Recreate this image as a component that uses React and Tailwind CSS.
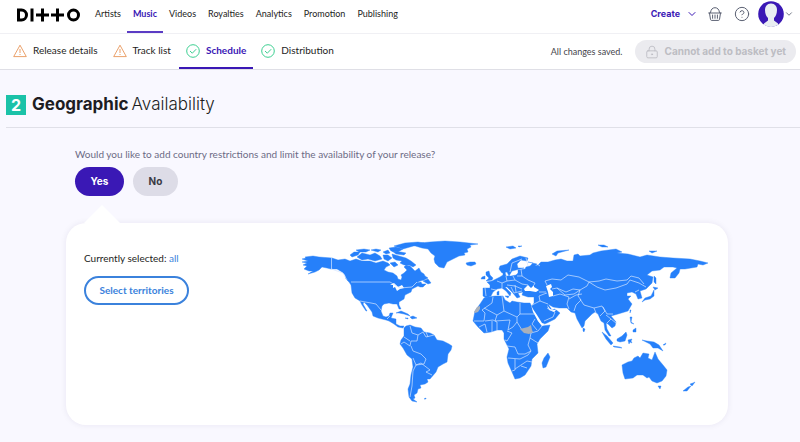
import { ChevronDown, CircleHelp, LockKeyhole } from "lucide-react";

const navItems = ["Artists", "Music", "Videos", "Royalties", "Analytics", "Promotion", "Publishing"];

const steps = [
  { label: "Release details", done: false },
  { label: "Track list", done: false },
  { label: "Schedule", done: true },
  { label: "Distribution", done: true },
];

const land = [
  // North America
  "M302 258L306 257L305 256L313 255L319 256L332 257L338 259L345 258L350 260L356 258L362 260L370 260L376 262L383 260L388 262L390 264L386 266L384 269L388 271L393 272L397 275L398 278L401 279L402 276L401 274L404 272L407 269L404 266L406 264L410 265L412 267L415 270L419 267L421 271L424 273L425 275L428 277L424 279L420 280L416 282L421 281L422 283L426 283L423 286L420 286L418 285L412 288L411 291L407 293L405 294L404 298L399 301L399 304L401 308L399 308L397 303L393 303L389 302L384 303L382 305L381 310L383 315L386 316L389 315L390 312L393 312L391 317L396 318L396 323L400 325L404 325L403 327L398 326L394 323L389 320L386 319L378 317L373 315L372 311L367 304L364 301L363 303L367 310L366 310L362 304L360 300L355 297L352 292L351 284L349 281L346 278L345 274L342 271L337 268L331 268L327 267L322 266L319 269L315 271L308 273L313 270L309 270L304 268L307 265L303 264L307 262L302 261L308 260Z",
  // Arctic islands
  "M350 254L354 251L360 251L358 254L352 256Z",
  "M357 256L362 252L370 254L375 252L380 255L382 258L375 260L368 258L362 259Z",
  "M356 249L364 248L370 249L366 251L359 251Z",
  "M371 249L376 248L381 249L378 251Z",
  "M383 251L388 249L390 252L386 253Z",
  "M383 254L388 254L392 257L388 260L384 258Z",
  "M392 253L399 255L406 257L411 260L416 264L413 266L409 264L404 264L400 262L402 260L396 259L393 257Z",
  "M389 247L396 246L403 248L398 251L391 250Z",
  "M392 250L401 251L406 252L404 254L396 253Z",
  "M394 245L405 242L418 241L424 242L417 244L410 246L403 248Z",
  "M390 262L395 261L398 264L394 266Z",
  "M423 280L428 278L431 282L428 283Z",
  // Caribbean
  "M396 312L401 310L408 313L410 315L404 313L399 312Z",
  "M410 316L413 315L417 317L412 318Z",
  "M405 317L408 317L408 318Z",
  // Greenland
  "M412 244L420 242L430 241L445 240L460 241L478 243L470 244L471 246L467 248L468 251L464 252L465 254L459 255L453 258L447 261L444 267L439 266L435 262L434 258L435 255L431 252L428 248L422 247Z",
  "M466 262L470 261L475 261L476 263L471 265L467 264Z",
  // South America
  "M404 327L406 325L410 324L415 326L421 327L424 331L430 332L434 334L437 339L443 340L449 343L452 345L451 349L448 353L447 361L443 363L438 366L436 371L430 378L427 378L428 381L425 383L420 384L421 387L418 388L417 392L414 394L415 397L413 398L417 401L412 400L409 396L408 388L410 383L411 374L413 366L412 358L407 354L403 347L400 343L401 339L404 335Z",
  "M424 398L426 397L426 398Z",
  // Africa
  "M484 297L488 296L495 295L503 295L505 299L510 302L512 300L517 301L524 302L530 302L532 306L536 315L538 320L542 325L550 324L548 330L540 338L537 343L538 352L532 358L531 365L525 374L520 377L515 378L512 371L508 362L507 356L509 348L504 338L504 332L502 329L497 329L491 331L484 332L478 326L473 320L475 310L480 303Z",
  "M548 352L550 356L546 366L543 367L542 362L544 357Z",
  // Europe and Asia
  "M483 287L490 287L490 284L487 281L492 280L496 278L500 276L503 274L503 271L505 271L506 275L511 275L516 274L518 272L518 269L525 268L526 266L530 265L533 262L528 261L537 263L535 265L538 264L541 261L548 261L555 259L561 258L567 260L573 260L574 254L578 253L580 255L590 254L593 252L601 250L616 248L622 251L617 252L628 253L640 256L647 254L660 256L673 257L690 258L700 260L708 262L703 264L698 263L697 266L685 268L680 268L679 272L675 277L670 277L671 272L677 267L673 266L664 266L660 269L652 270L647 274L653 276L652 282L646 288L640 290L642 297L638 298L636 293L632 291L627 292L627 295L631 295L628 298L632 303L628 310L618 313L611 315L616 321L615 325L612 327L608 323L606 322L607 328L611 335L609 335L605 329L604 322L601 320L598 313L595 311L592 313L585 320L584 325L582 327L577 318L575 312L571 311L567 307L559 307L553 306L548 303L552 309L555 308L560 312L555 318L547 322L542 324L535 313L531 306L534 302L534 296L528 296L522 294L523 291L518 292L520 296L517 297L512 291L507 286L505 286L511 292L510 295L506 290L502 287L497 288L493 291L491 295L486 297L483 295Z",
  "M499 268L500 265L507 263L512 258L520 255L528 257L527 260L521 259L517 263L518 267L524 267L516 269L512 270L509 275L507 271L502 272Z",
  // British Isles
  "M486 271L489 270L490 274L493 277L492 279L486 280L489 277L486 274Z",
  "M482 276L485 275L485 278L481 278Z",
  // Arctic Ocean
  "M506 246L513 245L516 247L510 248Z",
  "M518 245L522 245L519 246Z",
  "M552 253L557 250L569 249L558 252L556 255Z",
  "M598 244L604 244L608 246L602 246Z",
  "M649 250L657 250L652 252Z",
  // Mediterranean islands
  "M497 291L499 290L499 294L497 294Z",
  "M505 295L509 295L508 297Z",
  // Japan and East Asia
  "M654 275L656 277L656 283L654 281Z",
  "M653 286L658 287L655 289Z",
  "M654 289L654 295L650 298L645 299L642 301L645 297L651 295Z",
  "M630 309L631 309L630 312Z",
  "M630 316L632 316L631 321L634 323L631 322Z",
  "M633 329L636 327L636 331L633 331Z",
  "M583 327L585 328L584 331L583 330Z",
  // Indonesia and New Guinea
  "M602 331L607 335L613 342L611 344L606 338Z",
  "M613 345L620 346L622 347L614 346Z",
  "M617 338L622 335L626 331L627 334L625 340L620 341L617 340Z",
  "M628 339L632 338L631 340L632 342L630 341L629 343Z",
  "M642 339L647 340L654 341L659 344L663 350L658 347L653 347L650 343Z",
  "M663 344L666 342L665 344Z",
  // Australia and New Zealand
  "M622 364L628 361L632 360L634 357L638 355L640 357L643 352L649 353L648 357L652 359L655 351L658 358L663 364L667 369L666 375L662 380L657 382L652 380L649 376L647 377L643 374L637 374L633 377L625 378L623 372Z",
  "M658 385L661 385L660 388Z",
  "M683 390L688 386L691 385L687 390Z",
  "M690 383L693 382L695 381L692 385Z",
];

const seas = [
  "M524 288L528 284L531 287L534 284L534 286L539 289L536 291L530 290L525 290Z",
  "M546 285L551 283L552 286L550 288L553 291L553 295L549 296L548 291Z",
  "M390 284L394 282L398 286L402 284L404 287L400 288L397 290L395 286L393 287L393 284Z",
];

const borders = [
  "M331.500 257V268L343 272L347 279",
  "M351 281H390L400 287L412 286L417 281",
  "M360 300L371 302L376 303L381 309M387 318L390 315",
  "M410 325L412 332L418 334L417 340L411 340L410 345L404 341L401 343M404 336L410 340M418 334L423 331L426 336L434 334M426 331L428 336M411 345L413 350L421 353L426 358L424 363L416 364L413 357M416 364L413 370L412 385L410 396M416 364L421 362L430 369L426 371L432 374",
  "M493 296L492 302L482 309L485 312L484 320L474 320M502 295L504 310L497 314L484 307M504 310L517 316V321L513 326L508 329M520 302V313H535M520 313L517 316M497 314L495 320L510 319L508 329M485 320L493 319L497 321V329M479 326L485 323L487 331M492 320L492 331M517 321L522 329L531 332L538 330L542 325M531 332L530 337L538 342M507 330L512 332L507 340L505 339M507 345L515 346L518 353H525L531 350L528 344L530 337M508 357L520 358L528 354L531 350M515 358V369L512 370M515 368L521 364L527 360L532 361M521 365L527 367M535 318L532 323L537 329",
  "M485 287L486 295M491 288L496 289M497 280L502 282L502 287M506 275L507 280L502 282M507 280L515 279L522 283L528 284M513 275L515 279M507 284L515 285L522 288M511 286L514 292L522 290M515 284L516 291M521 268L522 275L528 279L535 282L534 284M517 275L522 275M526 257L528 265M510 271L512 262L522 258M537 263L540 265",
  "M532 304L540 300L539 295L544 293L547 292M539 291L546 291M540 300L548 303M547 307L555 311L553 316L544 320",
  "M547 284L545 280L552 278L561 279L568 274L579 276L589 281L587 285L580 289L573 288L566 291L557 287L552 288M553 295L560 293L569 296L567 303L569 308M557 287L565 294L574 293L580 289M569 298L576 294L582 293M574 310L576 304L581 299L578 295L580 289",
  "M589 281L597 286L605 289L616 287L627 283L630 279L639 282L646 286M589 281L599 280L606 278L617 280L627 279L631 275L639 277L644 283M580 298L584 304L594 307L602 305L605 310L600 315M594 307L596 312M603 306L607 313L613 313M606 314L611 318L607 322M611 318L616 322M635 291L639 289",
];

const WorldMap = () => (
  <svg viewBox="300 238 410 170" className="w-[410px] shrink-0" role="img" aria-label="World map">
    {land.map((d) => (
      <path key={d} d={d} fill="#2680fa" stroke="#2680fa" strokeWidth="0.4" />
    ))}
    <g fill="white">
      {seas.map((d) => (
        <path key={d} d={d} />
      ))}
      <path d="M531 304L533 308L537 314L542 322L545 323L542 325L538 320L533 311Z" />
      <path d="M547 304L550 308L554 309L557 308L554 311L549 309Z" />
    </g>
    <g fill="none" stroke="#d4e5ff" strokeWidth="0.7" strokeLinejoin="round">
      {borders.map((d) => (
        <path key={d} d={d} />
      ))}
    </g>
    <path d="M520 328L524 327L528 326L531 324L532 329L533 331L529 333L524 332Z" fill="#a9b0bb" />
    <path d="M480 305V308L478 311L475 312L474 311L477 306Z" fill="#a9b0bb" />
  </svg>
);

const Logo = () => (
  <svg viewBox="0 0 64 14" className="h-3.5 w-16" fill="none" stroke="black" strokeWidth="3" role="img" aria-label="Ditto">
    <path d="M2.500 2H5.500A5 5 0 0 1 5.500 12H2.500Z" />
    <path d="M16 0.500V13.500M26.500 0.500V13.500M20 7H33M41.500 0.500V13.500M35 7H48" />
    <circle cx="57.500" cy="7" r="5" />
  </svg>
);

const BasketIcon = () => (
  <svg viewBox="0 0 14 14" className="size-3.5" fill="none" stroke="currentColor" strokeLinecap="round">
    <path d="M0.700 6H13.300M1.500 6L2.500 12.500Q2.700 13.400 3.600 13.400H10.400Q11.300 13.400 11.500 12.500L12.500 6" />
    <path d="M2.500 5.500C2.800 2.500 4.500 0.700 7 0.700S11.200 2.500 11.500 5.500" />
    <path d="M4.600 8V11.300M7 8V11.300M9.400 8V11.300" />
  </svg>
);

const StepIcon = ({ done }) =>
  done ? (
    <svg viewBox="0 0 14 14" className="size-3.5" fill="none" stroke="#3ccf91">
      <circle cx="7" cy="7" r="6.300" />
      <path d="M4 7L6.300 9.200L10.200 5.200" />
    </svg>
  ) : (
    <svg viewBox="0 0 14 14" className="size-3.5" fill="none" stroke="#e8965a" strokeWidth="0.9">
      <path d="M7 1.200L13.300 12.600H0.700Z" strokeLinejoin="round" />
      <path d="M7 5V9M7 10V11" />
    </svg>
  );

const Avatar = () => (
  <svg viewBox="0 0 26 26" className="size-[26px]">
    <circle cx="13" cy="13" r="12.800" fill="#3a18b5" />
    <path d="M13 2.500C9 2.500 7 5.500 7 9C7 13 8.500 15.500 10 17V19.500L6 22.500V23.700A12.800 12.800 0 0 0 20 23.700V22.500L16 19.500V17C17.500 15.500 19 13 19 9C19 5.500 17 2.500 13 2.500Z" fill="#e9eef2" />
  </svg>
);

const App = () => {
  return (
    <div className="min-h-screen bg-[#f9f8ff] font-['Lato',sans-serif] text-[#1d1d22]">
      {/* Main navigation */}
      <header className="flex h-[34px] border-b border-[#f0f0f4] bg-white pl-4 pr-1.5">
        <div className="flex items-center pb-1">
          <Logo />
        </div>
        <nav className="ml-[9px] flex h-full text-[9px]">
          {navItems.map((item) => (
            <a
              key={item}
              href="#"
              className={
                item === "Music"
                  ? "flex items-center border-b-2 border-[#5b3cc4] px-1.5 pb-1 font-bold text-[#3a18b5]"
                  : "flex items-center border-b-2 border-transparent px-1.5 pb-1"
              }
            >
              {item}
            </a>
          ))}
        </nav>
        <div className="ml-auto flex items-center pb-1.5">
          <button className="flex items-center gap-1.5 font-['Inter',sans-serif] text-[9px] font-bold text-[#3a18b5]">
            Create
            <ChevronDown className="size-3" />
          </button>
          <button aria-label="Basket" className="ml-2.5 text-[#5a6072]">
            <BasketIcon />
          </button>
          <button aria-label="Help" className="ml-3 text-[#5a6072]">
            <CircleHelp className="size-4" strokeWidth={1.5} />
          </button>
          <button aria-label="Account" className="ml-2 flex items-center text-[#5a6072]">
            <Avatar />
            <ChevronDown className="size-2.5" />
          </button>
        </div>
      </header>

      {/* Release steps */}
      <div className="flex h-9 items-center border-b border-[#dfdfe6] bg-white pl-1.5 pr-1">
        <nav className="flex h-full gap-px text-[10px]">
          {steps.map(({ label, done }) => (
            <a
              key={label}
              href="#"
              className={
                label === "Schedule"
                  ? "flex items-center gap-1.5 border-b-2 border-[#3a18b5] px-[7px] font-bold text-[#3a18b5]"
                  : "flex items-center gap-1.5 border-b-2 border-transparent px-[7px]"
              }
            >
              <StepIcon done={done} />
              {label}
            </a>
          ))}
        </nav>
        <span className="ml-auto text-[9px] text-[#45454c]">All changes saved.</span>
        <button
          disabled
          className="ml-3 flex h-[23px] items-center gap-1.5 rounded-full bg-[#ebebef] px-2.5 font-['Inter',sans-serif] text-[10px] font-bold text-[#bdbdc3]"
        >
          <LockKeyhole className="size-3.5" strokeWidth={1.5} />
          Cannot add to basket yet
        </button>
      </div>

      <main>
        <h1 className="ml-1.5 flex h-[58px] items-center border-b border-[#e0e0e8] pt-3 font-['Inter',sans-serif] text-[17px]">
          <span className="mr-1.5 flex size-5 items-center justify-center bg-[#1bc2a8] text-base leading-none font-bold text-white">
            2
          </span>
          <span className="flex gap-[3px]">
            <span className="font-bold">Geographic</span>
            <span className="font-light">Availability</span>
          </span>
        </h1>

        <section className="ml-[66px] mr-[72px] pt-[18px]">
          <p className="pl-[9px] text-[10px] leading-4 text-[#6c6b85]">
            Would you like to add country restrictions and limit the availability of your release?
          </p>
          <div className="mt-[5px] flex gap-[9px] pl-[9px] font-['Inter',sans-serif] text-[10px] font-bold">
            <button className="h-[29px] w-[49px] rounded-full bg-[#3a18b5] text-white">Yes</button>
            <button className="h-[29px] w-[45px] rounded-full bg-[#dddce7] text-[#3a3a44]">No</button>
          </div>

          {/* Territory card */}
          <svg viewBox="0 0 36 18" className="ml-[18px] mt-[9px] h-[18px] w-9" fill="white">
            <path d="M0 18L18 0L36 18Z" />
          </svg>
          <div className="flex justify-between rounded-[20px] bg-white py-4 pl-[18px] pr-[18px] shadow-[0_0_6px_rgba(40,30,90,0.08)]">
            <div className="pt-[11px]">
              <p className="text-[10px] leading-4">
                Currently selected: <span className="text-[#3b82dc]">all</span>
              </p>
              <button className="mt-2.5 h-[29px] w-[105px] rounded-full border-2 border-[#3b82dc] text-[10px] font-bold text-[#3b82dc]">
                Select territories
              </button>
            </div>
            <WorldMap />
          </div>
        </section>
      </main>
    </div>
  );
};

export default App;
